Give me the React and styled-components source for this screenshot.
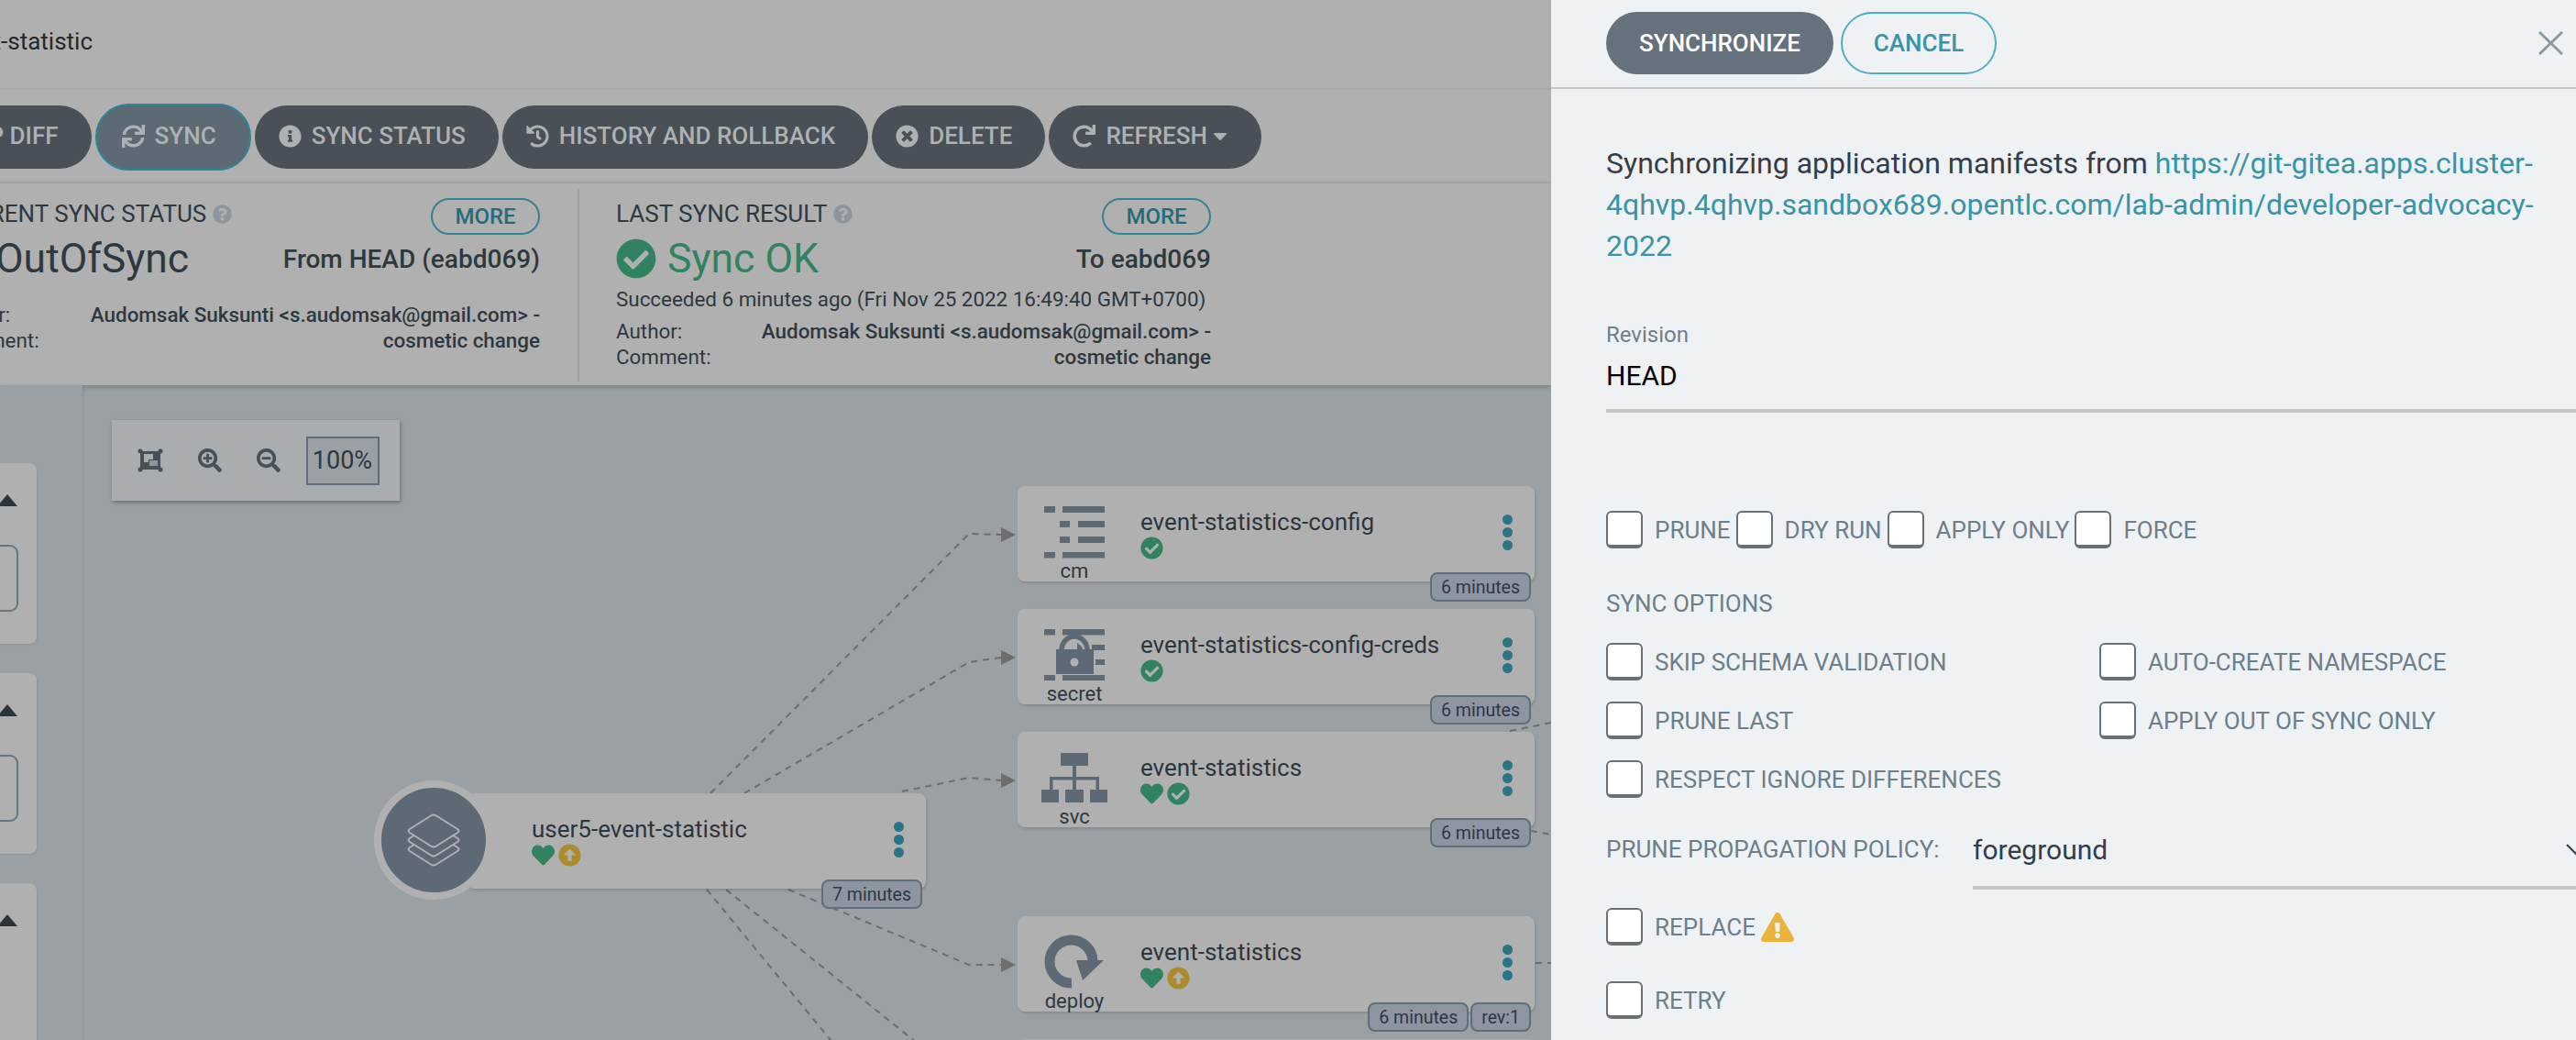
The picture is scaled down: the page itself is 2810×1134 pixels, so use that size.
import React from 'react';
import styled, { createGlobalStyle } from 'styled-components';
import {
  FaSync, FaInfoCircle, FaHistory, FaTimesCircle, FaRedo, FaCaretDown, FaFileMedical,
  FaQuestionCircle, FaCheckCircle, FaArrowAltCircleUp, FaHeart, FaSearchPlus, FaSearchMinus,
  FaExclamationTriangle,
} from 'react-icons/fa';

const Global = createGlobalStyle`
  html, body { margin: 0; padding: 0; background: #eff3f5; }
  * { box-sizing: border-box; }
  body { font-family: Roboto, "Liberation Sans", sans-serif; }
`;

const Page = styled.div`
  display: flex;
  width: 2810px;
  height: 1134px;
  overflow: hidden;
`;

const LeftPane = styled.div`
  width: 1692px;
  flex: none;
  display: flex;
  flex-direction: column;
  overflow: hidden;
  background: #b0b0b0;
`;

const TopBar = styled.div`
  height: 98px;
  flex: none;
  display: flex;
  align-items: center;
  border-bottom: 2px solid #a4aaae;
`;

const Crumb = styled.div`
  width: 101px;
  display: flex;
  justify-content: flex-end;
  font-size: 26px;
  white-space: nowrap;
  color: #23282c;
  margin-top: -6px;
`;

const Toolbar = styled.div`
  height: 102px;
  flex: none;
  padding-top: 3px;
  border-bottom: 2px solid #a4aaae;
`;

const ToolRow = styled.div`
  width: 1376px;
  height: 97px;
  display: flex;
  justify-content: flex-end;
  align-items: center;
  gap: 4px;
`;

const ToolButton = styled.button`
  flex: none;
  height: ${p => (p.$active ? 73 : 69)}px;
  display: flex;
  align-items: center;
  gap: 11px;
  padding: 0 36px 3px ${p => (p.$active ? 27 : 26)}px;
  border-radius: 36px;
  border: ${p => (p.$active ? '2px solid #2f8597' : 'none')};
  background: ${p => (p.$active ? '#5c6a74' : '#495057')};
  color: #aeb1b3;
  font: 500 26px Roboto, sans-serif;
  white-space: nowrap;
  svg { font-size: 25px; flex: none; }
`;

const MenuCaret = styled(FaCaretDown)`
  margin-left: -9px;
  margin-right: -3px;
  && { font-size: 24px; }
`;

const Status = styled.div`
  height: 220px;
  flex: none;
  padding-top: 6px;
  margin-left: -102px;
  display: flex;
  position: relative;
  z-index: 1;
  width: 1794px;
  background: #b0b0b0;
  box-shadow: 0 2px 6px rgba(0, 0, 0, 0.22);
`;

const Section = styled.div`
  height: 210px;
  flex: none;
  width: ${p => p.$w}px;
  padding: 10px 41px 0 ${p => p.$pl}px;
  border-right: ${p => (p.$divider ? '2px solid #9ca3a7' : 'none')};
`;

const HeadRow = styled.div`
  display: flex;
  justify-content: space-between;
  height: 40px;
`;

const SectionTitle = styled.div`
  display: flex;
  align-items: center;
  gap: 7px;
  height: 34px;
  font-size: 26px;
  color: #2e3840;
  white-space: nowrap;
  svg { color: #8e959d; font-size: 21px; }
`;

const MoreButton = styled.button`
  width: 119px;
  height: 40px;
  border: 2px solid #2f8597;
  border-radius: 20px;
  background: transparent;
  color: #236c7c;
  font: 500 24px Roboto, sans-serif;
  padding: 0;
`;

const BigRow = styled.div`
  height: 50px;
  margin-top: 1px;
  display: flex;
  justify-content: space-between;
  align-items: center;
  white-space: nowrap;
`;

const BigStatus = styled.div`
  display: flex;
  align-items: center;
  gap: 12px;
  font-size: 44.5px;
  font-weight: 400;
  color: ${p => p.$color};
  svg { font-size: 44px; flex: none; }
`;

const Revision = styled.div`
  font-size: 28px;
  font-weight: 500;
  color: #2e3840;
`;

const Succeeded = styled.div`
  height: 30px;
  line-height: 30px;
  margin-top: 4px;
  font-size: 22.4px;
  color: #2e3840;
  white-space: nowrap;
`;

const Meta = styled.div`
  display: grid;
  grid-template-columns: 158px 1fr;
  margin-top: ${p => p.$mt}px;
  font-size: 22.4px;
  line-height: 28px;
  color: #2e3840;
`;

const MetaValue = styled.div`
  grid-row: span 2;
  text-align: right;
  font-weight: 500;
  white-space: nowrap;
`;

const GraphArea = styled.div`
  flex: 1;
  min-height: 0;
  display: flex;
`;

const Sidebar = styled.div`
  width: 90px;
  flex: none;
  padding-top: 85px;
  display: flex;
  flex-direction: column;
  gap: 32px;
  overflow: hidden;
  background: #9ba0a4;
  box-shadow: 1px 0 2px rgba(0, 0, 0, 0.1);
  position: relative;
  z-index: 1;
`;

const FilterCard = styled.div`
  flex: ${p => (p.$grow ? '1' : 'none')};
  height: ${p => (p.$grow ? 'auto' : '197px')};
  width: 240px;
  margin-left: -200px;
  margin-bottom: ${p => (p.$grow ? '-20px' : '0')};
  padding: 34px 21px 0 0;
  border-radius: 8px;
  background: #b0b0b0;
  box-shadow: 1px 1px 2px rgba(0, 0, 0, 0.08);
`;

const Caret = styled.div`
  margin-left: auto;
  width: 0;
  height: 0;
  border-left: 11px solid transparent;
  border-right: 11px solid transparent;
  border-bottom: 13px solid #2b343b;
`;

const FilterBox = styled.div`
  height: 73px;
  margin: 42px -1px 0 0;
  border: 2px solid #66757f;
  border-radius: 9px;
`;

const Canvas = styled.div`
  flex: 1;
  position: relative;
  background: #9ba0a4;
  overflow: hidden;
`;

const Edges = styled.svg`
  position: absolute;
  left: 0;
  top: 0;
`;

const ZoomBar = styled.div`
  position: absolute;
  left: 32px;
  top: 38px;
  width: 314px;
  height: 88px;
  padding-left: 10px;
  display: flex;
  align-items: center;
  background: #a9adaf;
  box-shadow: 1px 2px 4px rgba(40, 50, 60, 0.45);
`;

const ZoomSlot = styled.div`
  width: 64.5px;
  display: flex;
  justify-content: center;
  color: #465059;
  svg { font-size: 26px; display: block; }
`;

const ZoomValue = styled.div`
  width: 80px;
  height: 53px;
  margin-left: 8px;
  display: flex;
  align-items: center;
  justify-content: center;
  border: 2px solid #5f6e7a;
  background: #9aa0a4;
  color: #2e3840;
  font-size: 27px;
`;

const Node = styled.div`
  position: absolute;
  left: ${p => p.$x - 90}px;
  top: ${p => p.$y - 420}px;
  width: ${p => p.$w}px;
  height: 104px;
  display: grid;
  grid-template-columns: ${p => (p.$main ? '70px' : '134px')} 1fr 60px;
  background: #b0b0b0;
  border-radius: 8px;
  box-shadow: 1px 2px 3px rgba(0, 0, 0, 0.14);
`;

const KindCol = styled.div`
  width: 124px;
  padding-top: 22px;
  display: flex;
  flex-direction: column;
  align-items: center;
`;

const KindIcon = styled.svg`
  display: block;
  height: 56px;
  color: #5d6a75;
  overflow: visible;
`;

const KindLabel = styled.div`
  height: 30px;
  line-height: 30px;
  font-size: 22px;
  color: #2e3840;
`;

const NodeBody = styled.div`
  padding-top: 24px;
  min-width: 0;
`;

const NodeTitle = styled.div`
  height: 30px;
  line-height: 30px;
  font-size: 26px;
  color: #2d363e;
  white-space: nowrap;
`;

const NodeStatus = styled.div`
  display: flex;
  gap: 4px;
  height: 25px;
  margin-top: 1px;
  svg { font-size: 25px; display: block; }
`;

const Dots = styled.div`
  padding-top: 31px;
  display: flex;
  flex-direction: column;
  align-items: center;
  gap: 3px;
`;

const Dot = styled.span`
  width: 11px;
  height: 11px;
  border-radius: 50%;
  background: #2a7483;
`;

const Badges = styled.div`
  position: absolute;
  right: 4px;
  bottom: -22px;
  display: flex;
  gap: 2px;
`;

const Badge = styled.div`
  height: 32px;
  padding: 0 10px;
  display: flex;
  align-items: center;
  font-size: 19.5px;
  color: #2e3840;
  background: #8d95a0;
  border: 2px solid #5f6f7b;
  border-radius: 8px;
  white-space: nowrap;
`;

const AppCircle = styled.div`
  position: absolute;
  left: -102px;
  top: -14px;
  width: 130px;
  height: 130px;
  border-radius: 50%;
  background: #5d6a75;
  border: 8px solid #b0b0b0;
  display: flex;
  align-items: center;
  justify-content: center;
  color: #b0b0b0;
`;

const RightPanel = styled.div`
  flex: 1;
  min-width: 0;
  overflow: hidden;
  background: #eef2f5;
`;

const PanelHeader = styled.div`
  height: 97px;
  padding: 13px 14px 0 60px;
  display: flex;
  gap: 8px;
  align-items: flex-start;
  border-bottom: 2px solid #c4c8cb;
`;

const PanelButton = styled.button`
  height: 68px;
  width: ${p => p.$w}px;
  padding: 0;
  border-radius: 34px;
  font: 500 26px Roboto, sans-serif;
  background: ${p => (p.$primary ? '#65727d' : 'transparent')};
  color: ${p => (p.$primary ? '#fff' : '#3a94a6')};
  border: ${p => (p.$primary ? 'none' : '2px solid #4fafc4')};
`;

const CloseIcon = styled.svg`
  margin: 21px 0 0 auto;
  width: 27px;
  height: 26px;
  color: #8b9aa5;
`;

const PanelBody = styled.div`
  padding-left: 60px;
`;

const Intro = styled.p`
  margin: 59px 0 0;
  width: 1022px;
  font-size: 32px;
  line-height: 44.8px;
  color: #363c4a;
  a { color: #3a94a6; text-decoration: none; }
`;

const FieldLabel = styled.div`
  margin-top: 60px;
  height: 30px;
  line-height: 30px;
  font-size: 24px;
  color: #6d7f8b;
`;

const FieldValue = styled.div`
  margin-top: 13px;
  height: 57px;
  line-height: 34px;
  font-size: 30px;
  color: #000;
  border-bottom: 4px solid #c4c4c4;
`;

const CheckRow = styled.div`
  display: flex;
  gap: 6px;
  margin-top: 107px;
`;

const CheckItem = styled.label`
  display: flex;
  align-items: center;
  gap: 13px;
  height: 41px;
  margin-top: ${p => p.$mt || 0}px;
  font-size: 26px;
  color: #6d7f8b;
  white-space: nowrap;
`;

const Box = styled.span`
  width: 40px;
  height: 41px;
  flex: none;
  background: #fff;
  border: 2px solid #6a7176;
  border-bottom-width: 4px;
  border-radius: 6px;
`;

const SubHeading = styled.div`
  margin-top: 43px;
  height: 34px;
  line-height: 34px;
  font-size: 26px;
  color: #6d7f8b;
`;

const OptionsGrid = styled.div`
  display: grid;
  grid-template-columns: 538px 1fr;
  row-gap: 23px;
  margin-top: 26px;
`;

const PolicyRow = styled.div`
  display: flex;
  margin-top: 16px;
`;

const PolicyLabel = styled.div`
  width: 400px;
  flex: none;
  height: 80px;
  line-height: 80px;
  font-size: 26px;
  color: #6d7f8b;
  white-space: nowrap;
`;

const Select = styled.div`
  flex: 1;
  height: 84px;
  display: flex;
  align-items: center;
  justify-content: space-between;
  font-size: 30px;
  color: #363c4a;
  border-bottom: 4px solid #c4c4c4;
  svg { margin-right: -12px; }
`;

const WarnIcon = styled(FaExclamationTriangle)`
  color: #eab33c;
  font-size: 36px;
  margin-left: -7px;
`;

const DIAMOND = 'M26 1.5 Q29 -0.5 32 1.5 L55 16 Q58 18 55 20 L32 34.5 Q29 36.5 26 34.5 L3 20 Q0 18 3 16 Z';

const Layers = () => (
  <svg width="58" height="58" viewBox="0 -1 58 58" fill="#5d6a75" stroke="currentColor" strokeWidth="2">
    <path d={DIAMOND} transform="translate(0 20)" />
    <path d={DIAMOND} transform="translate(0 10)" />
    <path d={DIAMOND} />
  </svg>
);

const KINDS = {
  cm: (
    <KindIcon width="66" viewBox="0 0 66 56" fill="currentColor">
      <rect x="0" y="0" width="12" height="7" />
      <rect x="20" y="0" width="46" height="7" />
      <rect x="17" y="16" width="11" height="7" />
      <rect x="37" y="16" width="29" height="7" />
      <rect x="17" y="33" width="11" height="7" />
      <rect x="37" y="33" width="29" height="7" />
      <rect x="0" y="50" width="12" height="6.5" />
      <rect x="20" y="50" width="46" height="6.5" />
    </KindIcon>
  ),
  secret: (
    <KindIcon width="66" viewBox="0 0 66 56" fill="currentColor">
      <rect x="0" y="0" width="12" height="6.5" />
      <rect x="20" y="0" width="46" height="6.5" />
      <rect x="52" y="17" width="14" height="6" />
      <rect x="56" y="33" width="10" height="6" />
      <rect x="0" y="50" width="12" height="6" />
      <rect x="20" y="50" width="46" height="6" />
      <path d="M19 23 A14 15 0 0 1 47 23" fill="none" stroke="currentColor" strokeWidth="5.5" />
      <path d="M36 15 L41 19 L42 22 L36 22 Z" />
      <rect x="13" y="22" width="41" height="27" />
      <circle cx="33" cy="36" r="4.5" fill="#b0b0b0" />
    </KindIcon>
  ),
  svc: (
    <KindIcon width="72" viewBox="0 0 72 56" fill="currentColor">
      <rect x="21" y="1" width="30" height="14" />
      <rect x="34" y="15" width="4" height="26" />
      <path d="M9 41 V27 H63 V41 H59.5 V30.5 H12.5 V41 Z" />
      <rect x="0" y="41" width="19" height="14" />
      <rect x="26" y="41" width="20" height="14" />
      <rect x="53" y="41" width="19" height="14" />
    </KindIcon>
  ),
  deploy: (
    <KindIcon width="66" viewBox="0 0 66 56" fill="currentColor">
      <path d="M30 51 A 23.5 23.5 0 1 1 53 27" fill="none" stroke="currentColor" strokeWidth="11" />
      <path d="M35 26 H65 L42 48 Z" />
    </KindIcon>
  ),
};

const StatusIcons = {
  heart: <FaHeart color="#318260" />,
  ok: <FaCheckCircle color="#318260" />,
  up: <FaArrowAltCircleUp color="#ad8a2b" />,
};

const NODES = [
  { x: 1110, y: 530, kind: 'cm', title: 'event-statistics-config', status: ['ok'], badges: ['6 minutes'] },
  { x: 1110, y: 664, kind: 'secret', title: 'event-statistics-config-creds', status: ['ok'], badges: ['6 minutes'] },
  { x: 1110, y: 798, kind: 'svc', title: 'event-statistics', status: ['heart', 'ok'], badges: ['6 minutes'] },
  { x: 1110, y: 999, kind: 'deploy', title: 'event-statistics', status: ['heart', 'up'], badges: ['6 minutes', 'rev:1'] },
];

const EDGES = [
  '775,865 1057,582 1092,583',
  '812,865 1057,722 1092,717',
  '984,863 1057,848 1092,851',
  '860,970 1057,1052 1092,1052',
  '792,970 1010,1145',
  '771,970 915,1145',
  '1647,797 1692,788',
  '1670,906 1692,910',
  '1675,1050 1692,1050',
];

const ARROWS = [583, 717, 851, 1052];

function GraphNode({ x, y, w = 564, main, kind, title, status, badges }) {
  return (
    <Node $x={x} $y={y} $w={w} $main={main}>
      {main ? (
        <AppCircle><Layers /></AppCircle>
      ) : (
        <KindCol>
          {KINDS[kind]}
          <KindLabel>{kind}</KindLabel>
        </KindCol>
      )}
      {main && <div />}
      <NodeBody>
        <NodeTitle>{title}</NodeTitle>
        <NodeStatus>{status.map((s, i) => <React.Fragment key={i}>{StatusIcons[s]}</React.Fragment>)}</NodeStatus>
      </NodeBody>
      <Dots><Dot /><Dot /><Dot /></Dots>
      <Badges>{badges.map(b => <Badge key={b}>{b}</Badge>)}</Badges>
    </Node>
  );
}

const Check = ({ children, mt }) => (
  <CheckItem $mt={mt}><Box />{children}</CheckItem>
);

export default function App() {
  return (
    <Page>
      <Global />
      <LeftPane>
        <TopBar><Crumb>user5-event-statistic</Crumb></TopBar>
        <Toolbar>
          <ToolRow>
            <ToolButton><FaFileMedical />APP DIFF</ToolButton>
            <ToolButton $active><FaSync />SYNC</ToolButton>
            <ToolButton><FaInfoCircle />SYNC STATUS</ToolButton>
            <ToolButton><FaHistory />HISTORY AND ROLLBACK</ToolButton>
            <ToolButton><FaTimesCircle />DELETE</ToolButton>
            <ToolButton><FaRedo />REFRESH<MenuCaret /></ToolButton>
          </ToolRow>
        </Toolbar>
        <Status>
          <Section $w={734} $pl={41} $divider>
            <HeadRow>
              <SectionTitle>CURRENT SYNC STATUS <FaQuestionCircle /></SectionTitle>
              <MoreButton>MORE</MoreButton>
            </HeadRow>
            <BigRow>
              <BigStatus $color="#2e3840"><FaArrowAltCircleUp color="#ad8a2b" />OutOfSync</BigStatus>
              <Revision>From HEAD (eabd069)</Revision>
            </BigRow>
            <Meta $mt={22}>
              <div>Author:</div>
              <MetaValue>Audomsak Suksunti &lt;s.audomsak@gmail.com&gt; -<br />cosmetic change</MetaValue>
              <div>Comment:</div>
            </Meta>
          </Section>
          <Section $w={730} $pl={40}>
            <HeadRow>
              <SectionTitle>LAST SYNC RESULT <FaQuestionCircle /></SectionTitle>
              <MoreButton>MORE</MoreButton>
            </HeadRow>
            <BigRow>
              <BigStatus $color="#318260"><FaCheckCircle />Sync OK</BigStatus>
              <Revision>To eabd069</Revision>
            </BigRow>
            <Succeeded>Succeeded 6 minutes ago (Fri Nov 25 2022 16:49:40 GMT+0700)</Succeeded>
            <Meta $mt={6}>
              <div>Author:</div>
              <MetaValue>Audomsak Suksunti &lt;s.audomsak@gmail.com&gt; -<br />cosmetic change</MetaValue>
              <div>Comment:</div>
            </Meta>
          </Section>
        </Status>
        <GraphArea>
          <Sidebar>
            <FilterCard><Caret /><FilterBox /></FilterCard>
            <FilterCard><Caret /><FilterBox /></FilterCard>
            <FilterCard $grow><Caret /></FilterCard>
          </Sidebar>
          <Canvas>
            <Edges width="1602" height="714" viewBox="90 420 1602 714" fill="none">
              {EDGES.map(p => (
                <polyline key={p} points={p} stroke="#677075" strokeWidth="2" strokeDasharray="7 6" />
              ))}
              {ARROWS.map(y => (
                <polygon key={y} points={`1092,${y - 8} 1108,${y} 1092,${y + 8}`} fill="#6e6e6e" />
              ))}
            </Edges>
            <ZoomBar>
              <ZoomSlot>
                <svg width="28" height="26" viewBox="0 0 28 26">
                  <path d="M3 3h22v20H3z" fill="currentColor" />
                  <circle cx="3" cy="3" r="2.5" fill="currentColor" />
                  <circle cx="25" cy="3" r="2.5" fill="currentColor" />
                  <circle cx="3" cy="23" r="2.5" fill="currentColor" />
                  <circle cx="25" cy="23" r="2.5" fill="currentColor" />
                  <path d="M7 6h10v9H7z" fill="#a9adaf" />
                  <path d="M12 12h11v8H12z" fill="currentColor" />
                  <path d="M13 13h9v6h-9z" fill="#8f9599" />
                </svg>
              </ZoomSlot>
              <ZoomSlot><FaSearchPlus /></ZoomSlot>
              <ZoomSlot><FaSearchMinus /></ZoomSlot>
              <ZoomValue>100%</ZoomValue>
            </ZoomBar>
            {NODES.map(n => <GraphNode key={n.y} {...n} />)}
            <Node $x={1110} $y={1133} $w={564} />
            <GraphNode x={510} y={865} w={500} main title="user5-event-statistic" status={['heart', 'up']} badges={['7 minutes']} />
          </Canvas>
        </GraphArea>
      </LeftPane>
      <RightPanel>
        <PanelHeader>
          <PanelButton $primary $w={248}>SYNCHRONIZE</PanelButton>
          <PanelButton $w={170}>CANCEL</PanelButton>
          <CloseIcon viewBox="0 0 27 26" fill="none" stroke="currentColor" strokeWidth="3">
            <path d="M1 1 L26 25 M26 1 L1 25" />
          </CloseIcon>
        </PanelHeader>
        <PanelBody>
          <Intro>
            Synchronizing application manifests from <a href="#repo">https://git-gitea.apps.cluster-4qhvp.4qhvp.sandbox689.opentlc.com/lab-admin/developer-advocacy-2022</a>
          </Intro>
          <FieldLabel>Revision</FieldLabel>
          <FieldValue>HEAD</FieldValue>
          <CheckRow>
            <Check>PRUNE</Check>
            <Check>DRY RUN</Check>
            <Check>APPLY ONLY</Check>
            <Check>FORCE</Check>
          </CheckRow>
          <SubHeading>SYNC OPTIONS</SubHeading>
          <OptionsGrid>
            <Check>SKIP SCHEMA VALIDATION</Check>
            <Check>AUTO-CREATE NAMESPACE</Check>
            <Check>PRUNE LAST</Check>
            <Check>APPLY OUT OF SYNC ONLY</Check>
            <Check>RESPECT IGNORE DIFFERENCES</Check>
          </OptionsGrid>
          <PolicyRow>
            <PolicyLabel>PRUNE PROPAGATION POLICY:</PolicyLabel>
            <Select>
              foreground
              <svg width="24" height="14" viewBox="0 0 24 14" fill="none" stroke="#363c4a" strokeWidth="2"><path d="M2 2 L12 12 L22 2" /></svg>
            </Select>
          </PolicyRow>
          <Check mt={20}>REPLACE <WarnIcon /></Check>
          <Check mt={39}>RETRY</Check>
        </PanelBody>
      </RightPanel>
    </Page>
  );
}
